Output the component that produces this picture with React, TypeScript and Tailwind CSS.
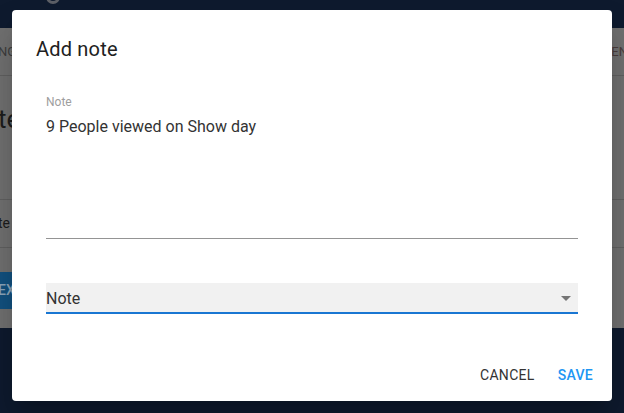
import React from 'react';

const font = { fontFamily: 'Roboto, "Liberation Sans", sans-serif' };

export default function App() {
  return (
    <div className="relative w-[624px] h-[413px] overflow-hidden bg-[#0e1a2e]" style={font}>
      {/* page behind the dialog, already dimmed by the backdrop */}
      <div className="flex flex-col h-full">
        <div className="h-[28px] shrink-0 bg-[#0e1a2e] relative">
          <div className="absolute left-[46px] top-[-10px] w-[14px] h-[14px] rounded-full border-[3px] border-[#5c5f66]" />
        </div>
        <div className="h-[300px] shrink-0 bg-[#6f6f6f] flex flex-col">
          <div className="h-[48px] flex items-center justify-between border-b border-[#5f5f5f] text-[13px] text-[#3c3c3c]">
            <span className="-ml-[2px]">NG</span>
            <span className="mr-[-4px] text-[#4a3c3c]">EN</span>
          </div>
          <div className="h-[124px] flex items-start pt-[30px] border-b border-[#5f5f5f]">
            <span className="text-[26px] text-[#1c1c1c] -ml-[2px] leading-none">te</span>
          </div>
          <div className="h-[48px] flex items-center border-b border-[#5f5f5f]">
            <span className="text-[14px] text-[#1c1c1c] -ml-[2px]">te</span>
          </div>
          <div className="mt-[24px] h-[37px] w-[20px] bg-[#12507e] flex items-center text-[14px] font-medium text-[#8aa3b8]">
            <span className="-ml-[2px]">EX</span>
          </div>
        </div>
        <div className="flex-1 bg-[#0e1a2e]" />
      </div>

      {/* dialog */}
      <div className="absolute left-[12px] top-[10px] w-[600px] h-[391px] bg-white rounded-[4px] shadow-[0_11px_15px_-7px_rgba(0,0,0,0.2),0_24px_38px_3px_rgba(0,0,0,0.14)] flex flex-col">
        <h2 className="pl-[24px] pt-[23px] h-[71px] text-[20px] leading-[32px] font-normal text-[#212121] tracking-[0.2px]">
          Add note
        </h2>

        <div className="px-[34px] flex flex-col">
          <div className="flex flex-col border-b border-[#949494] h-[158px] pt-[14px]">
            <label className="text-[12px] leading-[14px] text-[#9e9e9e]">Note</label>
            <div className="mt-[6px] text-[16px] leading-[24px] text-[#333333]">9 People viewed on Show day</div>
          </div>

          <div className="mt-[44px] h-[31px] bg-[#f1f1f1] border-b-2 border-[#1976d2] flex items-center justify-between">
            <span className="text-[16px] text-[#333333] leading-[24px] pt-[2px]">Note</span>
            <svg width="10" height="5" viewBox="0 0 10 5" className="mr-[7px] mt-[2px]">
              <path d="M0 0 L10 0 L5 5 Z" fill="#757575" />
            </svg>
          </div>
        </div>

        <div className="mt-auto mb-[14px] pr-[19px] flex justify-end items-center gap-[23px] text-[14px] tracking-[0.3px] leading-[24px]">
          <button className="text-[#333333] font-normal">CANCEL</button>
          <button className="text-[#2196f3] font-medium">SAVE</button>
        </div>
      </div>
    </div>
  );
}
